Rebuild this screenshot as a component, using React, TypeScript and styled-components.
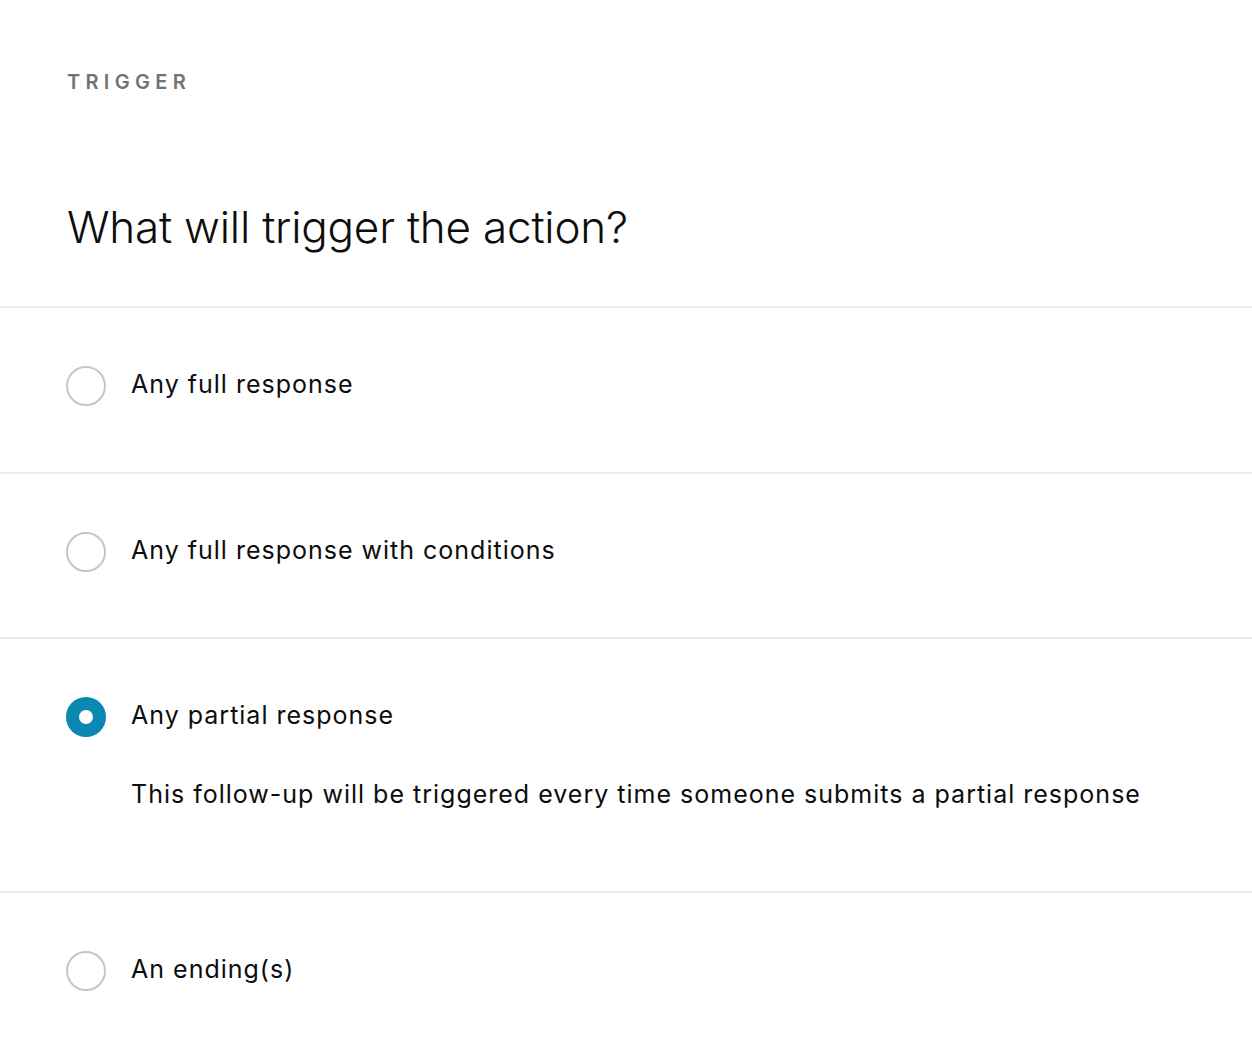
import React, { useState } from "react";
import styled, { createGlobalStyle } from "styled-components";

const Global = createGlobalStyle`
  html, body { margin: 0; padding: 0; background: #ffffff; }
  body { font-family: Inter, "Noto Sans", "Liberation Sans", sans-serif; color: #0d0d0d; -webkit-font-smoothing: antialiased; }
`;

const Page = styled.div`
  display: flex;
  flex-direction: column;
  width: 100%;
`;

const Header = styled.header`
  display: flex;
  flex-direction: column;
  padding: 68px 0 51px 67px;
  border-bottom: 2px solid #ebebeb;
`;

const Eyebrow = styled.div`
  font-size: 20px;
  line-height: 28px;
  font-weight: 600;
  letter-spacing: 5.3px;
  color: #737373;
  text-transform: uppercase;
`;

const Title = styled.h1`
  margin: 103px 0 0;
  font-size: 44px;
  line-height: 56px;
  font-weight: 300;
  letter-spacing: -0.2px;
  color: #0d0d0d;
`;

const Option = styled.div`
  display: flex;
  flex-direction: column;
  padding: 58px 0 65.5px 66px;
  border-bottom: 2px solid #ebebeb;
  cursor: pointer;
`;

const OptionHead = styled.div`
  display: flex;
  align-items: center;
  gap: 25px;
  height: 40px;
`;

const Radio = styled.span<{ $checked: boolean }>`
  box-sizing: border-box;
  flex: none;
  width: 40px;
  height: 40px;
  border-radius: 50%;
  background: ${(p) => (p.$checked ? "#0a88b1" : "#ffffff")};
  border: ${(p) => (p.$checked ? "none" : "2px solid #c6c6c6")};
  display: flex;
  align-items: center;
  justify-content: center;
  &::after {
    content: "";
    display: ${(p) => (p.$checked ? "block" : "none")};
    width: 14px;
    height: 14px;
    border-radius: 50%;
    background: #ffffff;
  }
`;

const Label = styled.span`
  font-size: 25px;
  line-height: 36px;
  font-weight: 400;
  letter-spacing: 1px;
  color: #0d0d0d;
  margin-top: -4px;
`;

const Description = styled.p`
  margin: 38.5px 0 14px 65px;
  font-size: 25px;
  line-height: 36px;
  font-weight: 400;
  letter-spacing: 1px;
  color: #0d0d0d;
`;

const options = [
  { id: "full", label: "Any full response" },
  { id: "conditions", label: "Any full response with conditions" },
  {
    id: "partial",
    label: "Any partial response",
    description:
      "This follow-up will be triggered every time someone submits a partial response",
  },
  { id: "ending", label: "An ending(s)" },
];

export default function App() {
  const [selected, setSelected] = useState("partial");
  return (
    <Page>
      <Global />
      <Header>
        <Eyebrow>Trigger</Eyebrow>
        <Title>What will trigger the action?</Title>
      </Header>
      {options.map((o) => (
        <Option key={o.id} onClick={() => setSelected(o.id)}>
          <OptionHead>
            <Radio $checked={selected === o.id} />
            <Label>{o.label}</Label>
          </OptionHead>
          {selected === o.id && o.description && (
            <Description>{o.description}</Description>
          )}
        </Option>
      ))}
    </Page>
  );
}
